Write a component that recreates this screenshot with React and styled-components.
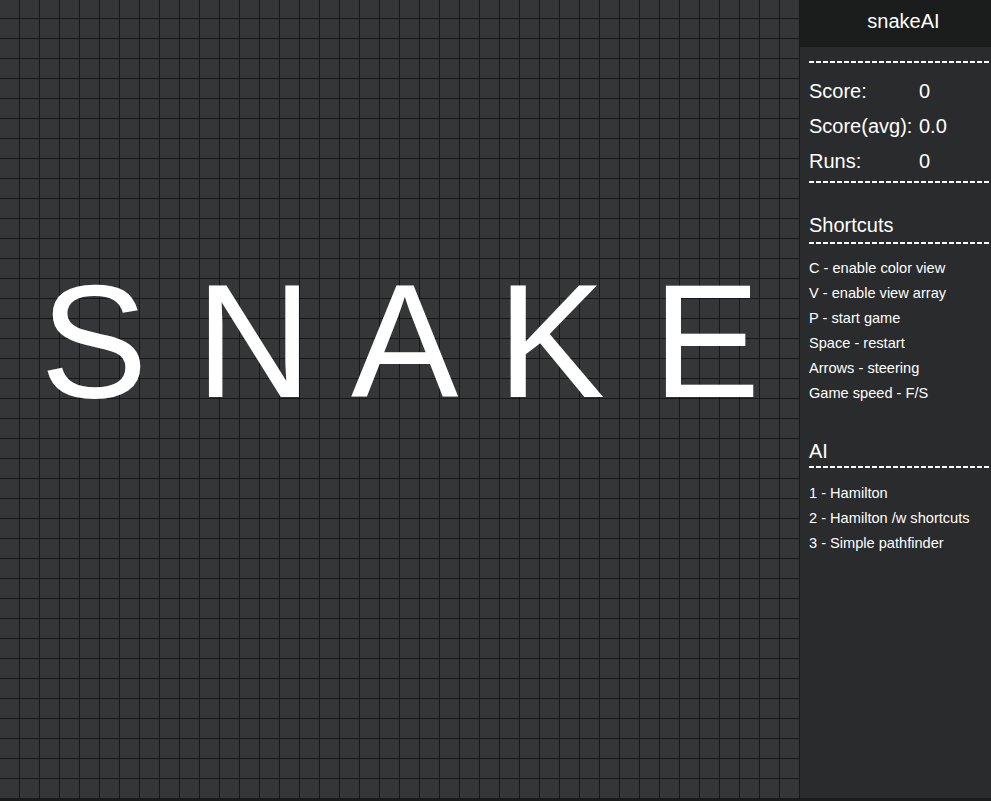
import React from "react";
import styled, { createGlobalStyle } from "styled-components";

const GlobalStyle = createGlobalStyle`
  html, body {
    margin: 0;
    padding: 0;
    background: #1a1b1b;
    overflow: hidden;
  }
  body {
    font-family: "Liberation Sans", Arial, sans-serif;
    color: #ffffff;
  }
`;

const Layout = styled.div`
  display: flex;
  width: 100vw;
  height: 798px;
  overflow: hidden;
`;

const Board = styled.div`
  flex: 0 0 800px;
  height: 798px;
  box-sizing: border-box;
  padding-top: 261px;
  background-color: #353638;
  background-image:
    linear-gradient(to right, transparent 19px, #161718 19px),
    linear-gradient(to bottom, transparent 18px, #161718 18px, #161718 19px, transparent 19px);
  background-size: 20px 20px;
`;

const Title = styled.div`
  font-family: "Liberation Sans", Arial, sans-serif;
  font-size: 161px;
  line-height: 160px;
  letter-spacing: 1.6px;
  padding-left: 2px;
  text-align: center;
  white-space: pre;
  color: #ffffff;
`;

const Sidebar = styled.aside`
  flex: 0 0 207px;
  background: #2a2b2d;
  display: flex;
  flex-direction: column;
`;

const Header = styled.header`
  height: 47px;
  box-sizing: border-box;
  padding-top: 9px;
  background: #1b1c1c;
  text-align: center;
  font-size: 20px;
  line-height: 24px;
`;

const Content = styled.div`
  padding: 14px 0 0 9px;
  display: flex;
  flex-direction: column;
`;

const Divider = styled.div`
  height: 2px;
  margin-top: ${(p) => p.$top || 0}px;
  background: repeating-linear-gradient(
    to right,
    #ffffff 0 5px,
    transparent 5px 7px
  );
`;

const Stats = styled.div`
  margin-top: 11px;
  display: grid;
  grid-template-columns: 110px 1fr;
  font-size: 20px;
  line-height: 35px;
`;

const Heading = styled.h2`
  margin: ${(p) => p.$top}px 0 0;
  font-size: 20px;
  line-height: 24px;
  font-weight: normal;
`;

const List = styled.ul`
  list-style: none;
  margin: ${(p) => p.$top || 12}px 0 0;
  padding: 0;
  font-size: 14.6px;
  line-height: 25px;
`;

const Item = styled.li`
  white-space: nowrap;
`;

const shortcuts = [
  "C - enable color view",
  "V - enable view array",
  "P - start game",
  "Space - restart",
  "Arrows - steering",
  "Game speed - F/S",
];

const ai = ["1 - Hamilton", "2 - Hamilton /w shortcuts", "3 - Simple pathfinder"];

export default function App() {
  return (
    <>
      <GlobalStyle />
      <Layout>
        <Board>
          <Title>S N A K E</Title>
        </Board>
        <Sidebar>
          <Header>snakeAI</Header>
          <Content>
            <Divider />
            <Stats>
              <span>Score:</span>
              <span>0</span>
              <span>Score(avg):</span>
              <span>0.0</span>
              <span>Runs:</span>
              <span>0</span>
            </Stats>
            <Divider $top={2} />
            <Heading $top={30}>Shortcuts</Heading>
            <Divider $top={5} />
            <List>
              {shortcuts.map((s) => (
                <Item key={s}>{s}</Item>
              ))}
            </List>
            <Heading $top={33}>AI</Heading>
            <Divider $top={3} />
            <List $top={13}>
              {ai.map((s) => (
                <Item key={s}>{s}</Item>
              ))}
            </List>
          </Content>
        </Sidebar>
      </Layout>
    </>
  );
}
